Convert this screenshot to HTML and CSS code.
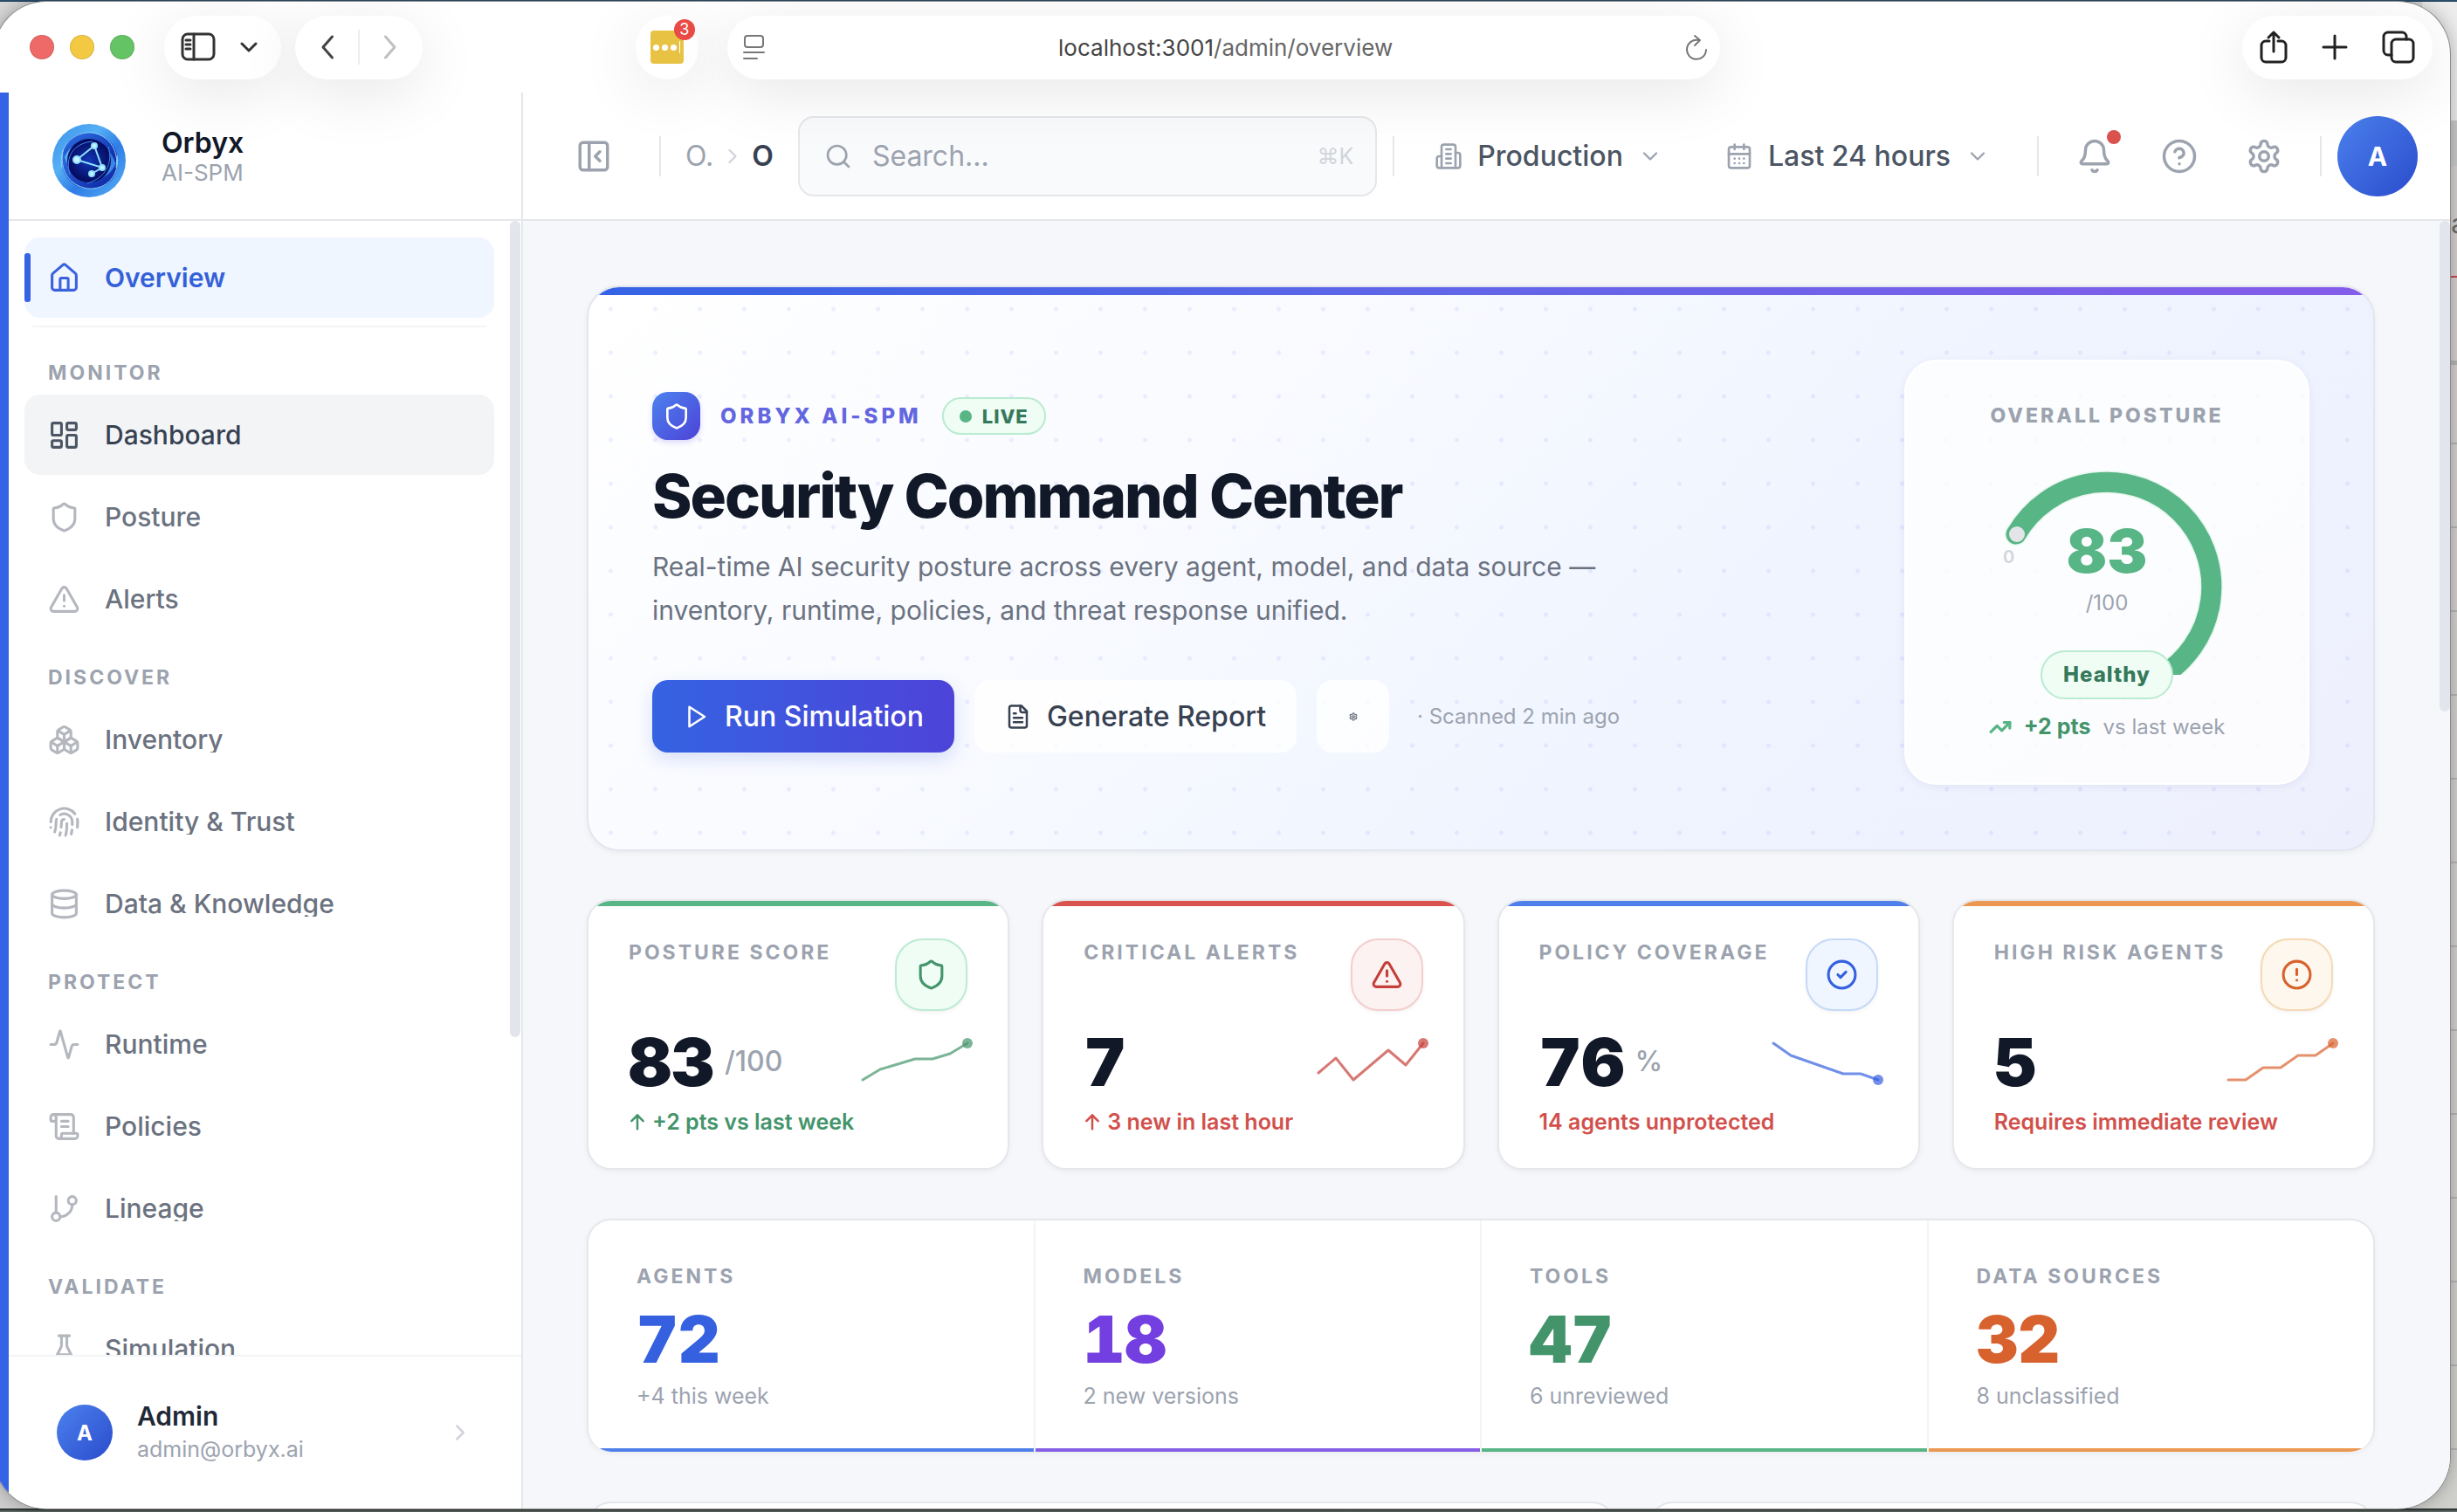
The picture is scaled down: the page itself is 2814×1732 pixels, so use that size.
FILE: index.html
```html
<!DOCTYPE html>
<html lang="en">

<head>
    <meta charset="UTF-8">
    <meta name="viewport" content="width=device-width, initial-scale=1.0">
    <title>Orbyx AI-SPM - Overview</title>
    <link rel="stylesheet" href="styles.css">
</head>

<body>
    <!-- Icon set -->
    <svg class="sprite" aria-hidden="true">
        <symbol id="i-home" viewBox="0 0 24 24"><path d="M15 21v-8a1 1 0 0 0-1-1h-4a1 1 0 0 0-1 1v8"/><path d="M3 10a2 2 0 0 1 .709-1.528l7-6a2 2 0 0 1 2.582 0l7 6A2 2 0 0 1 21 10v9a2 2 0 0 1-2 2H5a2 2 0 0 1-2-2z"/></symbol>
        <symbol id="i-dashboard" viewBox="0 0 24 24"><rect width="7" height="9" x="3" y="3" rx="1"/><rect width="7" height="5" x="14" y="3" rx="1"/><rect width="7" height="9" x="14" y="12" rx="1"/><rect width="7" height="5" x="3" y="16" rx="1"/></symbol>
        <symbol id="i-shield" viewBox="0 0 24 24"><path d="M20 13c0 5-3.500 7.500-7.660 8.950a1 1 0 0 1-.670-.010C7.500 20.500 4 18 4 13V6a1 1 0 0 1 1-1c2 0 4.500-1.200 6.240-2.720a1.170 1.170 0 0 1 1.520 0C14.510 3.810 17 5 19 5a1 1 0 0 1 1 1z"/></symbol>
        <symbol id="i-alert" viewBox="0 0 24 24"><path d="m21.730 18-8-14a2 2 0 0 0-3.480 0l-8 14A2 2 0 0 0 4 21h16a2 2 0 0 0 1.730-3"/><path d="M12 9v4"/><path d="M12 17h.01"/></symbol>
        <symbol id="i-boxes" viewBox="0 0 24 24"><path d="M2.970 12.920A2 2 0 0 0 2 14.630v3.240a2 2 0 0 0 .970 1.710l3 1.800a2 2 0 0 0 2.060 0L12 19v-5.500l-5-3-4.030 2.420Z"/><path d="m7 16.500-4.740-2.850"/><path d="m7 16.500 5-3"/><path d="M7 16.500v5.170"/><path d="M12 13.500V19l3.970 2.380a2 2 0 0 0 2.060 0l3-1.800a2 2 0 0 0 .970-1.710v-3.240a2 2 0 0 0-.970-1.710L17 10.500l-5 3Z"/><path d="m17 16.500-5-3"/><path d="m17 16.500 4.740-2.850"/><path d="M17 16.500v5.170"/><path d="M7.970 4.420A2 2 0 0 0 7 6.130v4.370l5 3 5-3V6.130a2 2 0 0 0-.970-1.710l-3-1.800a2 2 0 0 0-2.060 0l-3 1.800Z"/><path d="M12 8 7.260 5.150"/><path d="m12 8 4.740-2.850"/><path d="M12 13.500V8"/></symbol>
        <symbol id="i-fingerprint" viewBox="0 0 24 24"><path d="M12 10a2 2 0 0 0-2 2c0 1.020-.100 2.510-.260 4"/><path d="M14 13.120c0 2.380 0 6.380-1 8.880"/><path d="M17.290 21.020c.120-.600.430-2.300.500-3.020"/><path d="M2 12a10 10 0 0 1 18-6"/><path d="M2 16h.01"/><path d="M21.800 16c.200-2 .131-5.354 0-6"/><path d="M5 19.500C5.500 18 6 15 6 12a6 6 0 0 1 .340-2"/><path d="M8.650 22c.210-.660.450-1.320.570-2"/><path d="M9 6.800a6 6 0 0 1 9 5.200v2"/></symbol>
        <symbol id="i-database" viewBox="0 0 24 24"><ellipse cx="12" cy="5" rx="9" ry="3"/><path d="M3 5v14a9 3 0 0 0 18 0V5"/><path d="M3 12a9 3 0 0 0 18 0"/></symbol>
        <symbol id="i-activity" viewBox="0 0 24 24"><path d="M22 12h-2.480a2 2 0 0 0-1.930 1.460l-2.350 8.360a.25.25 0 0 1-.480 0L9.240 2.180a.25.25 0 0 0-.480 0l-2.350 8.360A2 2 0 0 1 4.490 12H2"/></symbol>
        <symbol id="i-scroll" viewBox="0 0 24 24"><path d="M15 12h-5"/><path d="M15 8h-5"/><path d="M19 17V5a2 2 0 0 0-2-2H4"/><path d="M8 21h12a2 2 0 0 0 2-2v-1a1 1 0 0 0-1-1H11a1 1 0 0 0-1 1v1a2 2 0 1 1-4 0V5a2 2 0 1 0-4 0v2a1 1 0 0 0 1 1h3"/></symbol>
        <symbol id="i-branch" viewBox="0 0 24 24"><path d="M6 3v12"/><circle cx="18" cy="6" r="3"/><circle cx="6" cy="18" r="3"/><path d="M18 9a9 9 0 0 1-9 9"/></symbol>
        <symbol id="i-flask" viewBox="0 0 24 24"><path d="M10 2v7.300a2 2 0 0 1-.200.900L4.700 20.500A1 1 0 0 0 5.700 22h12.600a1 1 0 0 0 1-1.500l-5.100-10.300a2 2 0 0 1-.200-.900V2"/><path d="M8 2h8"/><path d="M7 16h10"/></symbol>
        <symbol id="i-right" viewBox="0 0 24 24"><path d="m9 18 6-6-6-6"/></symbol>
        <symbol id="i-left" viewBox="0 0 24 24"><path d="m15 20-7-8 7-8"/></symbol>
        <symbol id="i-down" viewBox="0 0 24 24"><path d="m6 9 6 6 6-6"/></symbol>
        <symbol id="i-panel" viewBox="0 0 24 24"><rect width="18" height="18" x="3" y="3" rx="2"/><path d="M9 3v18"/><path d="m16 15-3-3 3-3"/></symbol>
        <symbol id="i-search" viewBox="0 0 24 24"><circle cx="11" cy="11" r="8"/><path d="m21 21-4.300-4.300"/></symbol>
        <symbol id="i-building" viewBox="0 0 24 24"><path d="M6 22V4a2 2 0 0 1 2-2h8a2 2 0 0 1 2 2v18Z"/><path d="M6 12H4a2 2 0 0 0-2 2v6a2 2 0 0 0 2 2h2"/><path d="M18 9h2a2 2 0 0 1 2 2v9a2 2 0 0 1-2 2h-2"/><path d="M10 6h4M10 10h4M10 14h4M10 18h4"/></symbol>
        <symbol id="i-calendar" viewBox="0 0 24 24"><path d="M8 2v4M16 2v4"/><rect width="18" height="18" x="3" y="4" rx="2"/><path d="M3 10h18"/><path d="M8 14h.01M12 14h.01M16 14h.01M8 18h.01M12 18h.01M16 18h.01"/></symbol>
        <symbol id="i-bell" viewBox="0 0 24 24"><path d="M10.268 21a2 2 0 0 0 3.464 0"/><path d="M3.262 15.326A1 1 0 0 0 4 17h16a1 1 0 0 0 .740-1.673C19.410 13.956 18 12.499 18 8A6 6 0 0 0 6 8c0 4.499-1.411 5.956-2.738 7.326"/></symbol>
        <symbol id="i-help" viewBox="0 0 24 24"><circle cx="12" cy="12" r="10"/><path d="M9.090 9a3 3 0 0 1 5.830 1c0 2-3 3-3 3"/><path d="M12 17h.01"/></symbol>
        <symbol id="i-settings" viewBox="0 0 24 24"><path d="M12.220 2h-.440a2 2 0 0 0-2 2v.180a2 2 0 0 1-1 1.730l-.430.250a2 2 0 0 1-2 0l-.150-.080a2 2 0 0 0-2.730.730l-.220.380a2 2 0 0 0 .730 2.730l.150.100a2 2 0 0 1 1 1.720v.510a2 2 0 0 1-1 1.740l-.150.090a2 2 0 0 0-.730 2.730l.220.380a2 2 0 0 0 2.730.730l.150-.080a2 2 0 0 1 2 0l.430.250a2 2 0 0 1 1 1.730V20a2 2 0 0 0 2 2h.440a2 2 0 0 0 2-2v-.180a2 2 0 0 1 1-1.730l.430-.250a2 2 0 0 1 2 0l.150.080a2 2 0 0 0 2.730-.730l.220-.390a2 2 0 0 0-.730-2.730l-.150-.080a2 2 0 0 1-1-1.740v-.500a2 2 0 0 1 1-1.740l.150-.090a2 2 0 0 0 .730-2.730l-.220-.380a2 2 0 0 0-2.730-.730l-.150.080a2 2 0 0 1-2 0l-.430-.250a2 2 0 0 1-1-1.730V4a2 2 0 0 0-2-2z"/><circle cx="12" cy="12" r="3"/></symbol>
        <symbol id="i-play" viewBox="0 0 24 24"><path d="m6 3 14 9-14 9z"/></symbol>
        <symbol id="i-file" viewBox="0 0 24 24"><path d="M15 2H6a2 2 0 0 0-2 2v16a2 2 0 0 0 2 2h12a2 2 0 0 0 2-2V7Z"/><path d="M14 2v4a2 2 0 0 0 2 2h4"/><path d="M10 9H8M16 13H8M16 17H8"/></symbol>
        <symbol id="i-trend" viewBox="0 0 24 24"><path d="m22 7-8.500 8.500-5-5L2 17"/><path d="M16 7h6v6"/></symbol>
        <symbol id="i-check" viewBox="0 0 24 24"><circle cx="12" cy="12" r="10"/><path d="m9 12 2 2 4-4"/></symbol>
        <symbol id="i-warn" viewBox="0 0 24 24"><circle cx="12" cy="12" r="10"/><path d="M12 8v4"/><path d="M12 16h.01"/></symbol>
        <symbol id="i-up" viewBox="0 0 24 24"><path d="m4 11 8-8 8 8"/><path d="M12 3v19"/></symbol>
    </svg>

    <!-- Window behind, only its right edge shows -->
    <div class="backdrop"><span>a</span></div>

    <div class="window">
        <div class="toolbar">
            <div class="lights">
                <span class="light red"></span>
                <span class="light yellow"></span>
                <span class="light green"></span>
            </div>
            <div class="pill pill-sidebar">
                <button type="button" aria-label="Sidebar">
                    <svg class="icon" width="40" height="34" viewBox="0 0 40 34"><rect x="2" y="2" width="36" height="29" rx="6"/><path d="M15 2v29M6 9h5M6 14h5M6 19h5"/></svg>
                </button>
                <button type="button" aria-label="Tab groups">
                    <svg class="icon" width="20" height="14" viewBox="0 0 20 14"><path d="m2 3 8 8 8-8"/></svg>
                </button>
            </div>
            <div class="pill pill-nav">
                <button type="button" aria-label="Back"><svg class="icon" width="36" height="36"><use href="#i-left"/></svg></button>
                <span class="pill-line"></span>
                <button type="button" class="off" aria-label="Forward"><svg class="icon flip" width="36" height="36"><use href="#i-left"/></svg></button>
            </div>
            <div class="toolbar-space"></div>
            <button type="button" class="pill pill-ext" aria-label="Password extension">
                <span class="ext-icon"><i></i><i></i><i></i><b></b></span>
                <span class="ext-badge">3</span>
            </button>
            <div class="pill pill-url">
                <svg class="icon" width="26" height="30" viewBox="0 0 26 30"><rect x="2" y="2" width="21" height="13" rx="3"/><path d="M1 21h23M1 28h15"/></svg>
                <span class="url">localhost:3001<em>/admin/overview</em></span>
                <button type="button" aria-label="Reload">
                    <svg class="icon" width="26" height="30" viewBox="0 0 26 30"><path d="M15 7A11 11 0 1 0 24 18"/><path d="m11 2 6 5-6 6"/></svg>
                </button>
            </div>
            <div class="toolbar-space wide"></div>
            <div class="pill pill-actions">
                <button type="button" aria-label="Share">
                    <svg class="icon" width="32" height="40" viewBox="0 0 32 40"><path d="M11 13H7a5 5 0 0 0-5 5v14a5 5 0 0 0 5 5h18a5 5 0 0 0 5-5V18a5 5 0 0 0-5-5h-4M16 25V3M10 9l6-6 6 6"/></svg>
                </button>
                <button type="button" aria-label="New tab">
                    <svg class="icon" width="30" height="30" viewBox="0 0 30 30"><path d="M15 2v26M2 15h26"/></svg>
                </button>
                <button type="button" aria-label="Tabs">
                    <svg class="icon" width="38" height="38" viewBox="0 0 38 38"><rect x="11" y="10" width="25" height="26" rx="5"/><path d="M11 28H7a5 5 0 0 1-5-5V7a5 5 0 0 1 5-5h16a5 5 0 0 1 5 5v3"/></svg>
                </button>
            </div>
        </div>

        <div class="app">
            <aside class="sidebar">
                <div class="brand">
                    <svg width="84" height="84" viewBox="0 0 84 84">
                        <defs>
                            <linearGradient id="ring" x1="0" y1="0" x2="1" y2="1">
                                <stop offset="0" stop-color="#3c8fe9"/>
                                <stop offset=".35" stop-color="#55b0f5"/>
                                <stop offset=".6" stop-color="#2f7ce6"/>
                                <stop offset="1" stop-color="#58b4f6"/>
                            </linearGradient>
                            <linearGradient id="arm" x1="0" y1="0" x2="1" y2="1">
                                <stop offset="0" stop-color="#2f74e8"/>
                                <stop offset="1" stop-color="#0a1f9c"/>
                            </linearGradient>
                            <radialGradient id="core">
                                <stop offset="0" stop-color="#1238b8"/>
                                <stop offset="1" stop-color="#050a5c"/>
                            </radialGradient>
                        </defs>
                        <circle cx="42" cy="42" r="42" fill="url(#ring)"/>
                        <path d="M12 46C8 26 22 8 44 10c22 2 34 20 30 40C70 34 62 26 48 22 30 16 14 28 12 46z" fill="url(#arm)"/>
                        <path d="M74 40c4 20-12 36-34 34C18 72 6 52 12 30c4 16 8 26 24 32 18 6 34-4 38-22z" fill="url(#arm)"/>
                        <circle cx="42" cy="42" r="25" fill="url(#core)"/>
                        <path d="M11 50C6 26 24 8 46 10c22 4 30 24 27 40M74 36c4 22-12 40-34 38C18 70 8 52 12 30" fill="none" stroke="#8dd2fb" stroke-width="1"/>
                        <path d="M20 58C14 38 24 22 46 20M64 26c6 20-4 36-24 42" fill="none" stroke="#3f86ee" stroke-width="1"/>
                        <g fill="#c9f4ff" stroke="#8fe0ff" stroke-width="2">
                            <path d="M28 41 48 25 57 50 28 41M57 50 45 57" fill="none"/>
                            <circle cx="28" cy="41" r="4"/><circle cx="48" cy="25" r="3"/><circle cx="57" cy="50" r="3"/><circle cx="45" cy="57" r="3"/>
                        </g>
                    </svg>
                    <div>
                        <div class="brand-name">Orbyx</div>
                        <div class="brand-sub">AI-SPM</div>
                    </div>
                </div>

                <nav class="nav">
                    <a href="#" class="nav-item active"><svg class="icon" width="37" height="37"><use href="#i-home"/></svg><span>Overview</span></a>
                    <div class="nav-line"></div>

                    <div class="nav-group">
                        <h2>Monitor</h2>
                        <a href="#" class="nav-item hover"><svg class="icon" width="37" height="37"><use href="#i-dashboard"/></svg><span>Dashboard</span></a>
                        <a href="#" class="nav-item"><svg class="icon" width="37" height="37"><use href="#i-shield"/></svg><span>Posture</span></a>
                        <a href="#" class="nav-item"><svg class="icon" width="37" height="37"><use href="#i-alert"/></svg><span>Alerts</span></a>
                    </div>
                    <div class="nav-group">
                        <h2>Discover</h2>
                        <a href="#" class="nav-item"><svg class="icon" width="37" height="37"><use href="#i-boxes"/></svg><span>Inventory</span></a>
                        <a href="#" class="nav-item"><svg class="icon" width="37" height="37"><use href="#i-fingerprint"/></svg><span>Identity &amp; Trust</span></a>
                        <a href="#" class="nav-item"><svg class="icon" width="37" height="37"><use href="#i-database"/></svg><span>Data &amp; Knowledge</span></a>
                    </div>
                    <div class="nav-group">
                        <h2>Protect</h2>
                        <a href="#" class="nav-item"><svg class="icon" width="37" height="37"><use href="#i-activity"/></svg><span>Runtime</span></a>
                        <a href="#" class="nav-item"><svg class="icon" width="37" height="37"><use href="#i-scroll"/></svg><span>Policies</span></a>
                        <a href="#" class="nav-item"><svg class="icon" width="37" height="37"><use href="#i-branch"/></svg><span>Lineage</span></a>
                    </div>
                    <div class="nav-group">
                        <h2>Validate</h2>
                        <a href="#" class="nav-item"><svg class="icon" width="37" height="37"><use href="#i-flask"/></svg><span>Simulation</span></a>
                    </div>
                    <div class="scrollbar nav-scroll"></div>
                </nav>

                <a href="#" class="account">
                    <span class="avatar small">A</span>
                    <span class="account-text">
                        <strong>Admin</strong>
                        <span>admin@orbyx.ai</span>
                    </span>
                    <svg class="icon" width="30" height="30"><use href="#i-right"/></svg>
                </a>
            </aside>

            <div class="content">
                <header class="topbar">
                    <button type="button" class="collapse" aria-label="Collapse sidebar"><svg class="icon" width="42" height="42"><use href="#i-panel"/></svg></button>
                    <span class="vline"></span>
                    <div class="crumbs">
                        <a href="#">O.</a>
                        <svg class="icon" width="28" height="28"><use href="#i-right"/></svg>
                        <strong>O</strong>
                    </div>
                    <label class="search">
                        <svg class="icon" width="32" height="32"><use href="#i-search"/></svg>
                        <input type="text" placeholder="Search..." aria-label="Search">
                        <kbd>⌘K</kbd>
                    </label>
                    <span class="vline"></span>
                    <button type="button" class="picker">
                        <svg class="icon" width="32" height="32"><use href="#i-building"/></svg>
                        Production
                        <svg class="icon" width="28" height="28"><use href="#i-down"/></svg>
                    </button>
                    <button type="button" class="picker">
                        <svg class="icon" width="32" height="32"><use href="#i-calendar"/></svg>
                        Last 24 hours
                        <svg class="icon" width="28" height="28"><use href="#i-down"/></svg>
                    </button>
                    <span class="vline"></span>
                    <div class="tools">
                        <button type="button" class="tool" aria-label="Notifications"><svg class="icon" width="42" height="42"><use href="#i-bell"/></svg><span class="dot"></span></button>
                        <button type="button" class="tool" aria-label="Help"><svg class="icon" width="42" height="42"><use href="#i-help"/></svg></button>
                        <button type="button" class="tool" aria-label="Settings"><svg class="icon" width="42" height="42"><use href="#i-settings"/></svg></button>
                    </div>
                    <span class="vline"></span>
                    <button type="button" class="avatar">A</button>
                </header>

                <main class="main">
                    <section class="hero">
                        <div class="hero-inner">
                            <div class="hero-text">
                                <div class="hero-top">
                                    <span class="hero-icon"><svg class="icon" width="32" height="32"><use href="#i-shield"/></svg></span>
                                    <span class="hero-label">ORBYX AI-SPM</span>
                                    <span class="live"><i></i>LIVE</span>
                                </div>
                                <h1>Security Command Center</h1>
                                <p>Real-time AI security posture across every agent, model, and data source — inventory, runtime, policies, and threat response unified.</p>
                                <div class="hero-actions">
                                    <button type="button" class="btn btn-primary"><svg class="icon" width="30" height="30"><use href="#i-play"/></svg>Run Simulation</button>
                                    <button type="button" class="btn"><svg class="icon" width="30" height="30"><use href="#i-file"/></svg>Generate Report</button>
                                    <button type="button" class="btn btn-square" aria-label="Settings"><svg class="icon" width="10" height="10"><use href="#i-settings"/></svg></button>
                                    <span class="scanned">· Scanned 2 min ago</span>
                                </div>
                            </div>

                            <div class="posture">
                                <h2>Overall Posture</h2>
                                <div class="gauge">
                                    <svg width="368" height="267" viewBox="0 0 368 267">
                                        <path d="M80 106A120 120 0 1 1 244 270" fill="none" stroke="#e5f6ed" stroke-width="26" stroke-linecap="round"/>
                                        <path d="M80 106A120 120 0 1 1 244 270" fill="none" stroke="#58b585" stroke-width="23" stroke-linecap="round"/>
                                        <circle cx="81" cy="106" r="9" fill="#e4e5e8"/>
                                    </svg>
                                    <span class="gauge-zero">0</span>
                                    <div class="gauge-value"><strong>83</strong><span>/100</span></div>
                                </div>
                                <span class="healthy">Healthy</span>
                                <div class="posture-trend">
                                    <svg class="icon" width="26" height="26"><use href="#i-trend"/></svg>
                                    <strong>+2 pts</strong>
                                    <span>vs last week</span>
                                </div>
                            </div>
                        </div>
                    </section>

                    <section class="kpis">
                        <article class="kpi green">
                            <div class="kpi-head">
                                <h3>Posture Score</h3>
                                <span class="kpi-icon"><svg class="icon" width="37" height="37"><use href="#i-shield"/></svg></span>
                            </div>
                            <div class="kpi-body">
                                <div class="kpi-value">83<small>/100</small></div>
                                <svg class="spark" width="120" height="42" viewBox="0 0 120 42"><polyline points="0,42 20,30 40,24 60,18 80,18 100,12 120,0"/><circle cx="120" cy="0" r="6"/></svg>
                            </div>
                            <p><svg class="icon" width="20" height="22"><use href="#i-up"/></svg>+2 pts vs last week</p>
                        </article>
                        <article class="kpi red">
                            <div class="kpi-head">
                                <h3>Critical Alerts</h3>
                                <span class="kpi-icon"><svg class="icon" width="37" height="37"><use href="#i-alert"/></svg></span>
                            </div>
                            <div class="kpi-body">
                                <div class="kpi-value">7</div>
                                <svg class="spark" width="120" height="42" viewBox="0 0 120 42"><polyline points="0,34 20,17 40,42 60,25 80,8 100,25 120,0"/><circle cx="120" cy="0" r="6"/></svg>
                            </div>
                            <p><svg class="icon" width="20" height="22"><use href="#i-up"/></svg>3 new in last hour</p>
                        </article>
                        <article class="kpi blue">
                            <div class="kpi-head">
                                <h3>Policy Coverage</h3>
                                <span class="kpi-icon"><svg class="icon" width="37" height="37"><use href="#i-check"/></svg></span>
                            </div>
                            <div class="kpi-body">
                                <div class="kpi-value">76<small>%</small></div>
                                <svg class="spark" width="120" height="42" viewBox="0 0 120 42"><polyline points="0,0 20,14 40,21 60,28 80,35 100,35 120,42"/><circle cx="120" cy="42" r="6"/></svg>
                            </div>
                            <p class="bad">14 agents unprotected</p>
                        </article>
                        <article class="kpi orange">
                            <div class="kpi-head">
                                <h3>High Risk Agents</h3>
                                <span class="kpi-icon"><svg class="icon" width="37" height="37"><use href="#i-warn"/></svg></span>
                            </div>
                            <div class="kpi-body">
                                <div class="kpi-value">5</div>
                                <svg class="spark" width="120" height="42" viewBox="0 0 120 42"><polyline points="0,42 20,42 40,28 60,28 80,14 100,14 120,0"/><circle cx="120" cy="0" r="6"/></svg>
                            </div>
                            <p class="bad">Requires immediate review</p>
                        </article>
                    </section>

                    <section class="stats">
                        <div class="stat blue">
                            <h3>Agents</h3>
                            <strong>72</strong>
                            <span>+4 this week</span>
                        </div>
                        <div class="stat purple">
                            <h3>Models</h3>
                            <strong>18</strong>
                            <span>2 new versions</span>
                        </div>
                        <div class="stat green">
                            <h3>Tools</h3>
                            <strong>47</strong>
                            <span>6 unreviewed</span>
                        </div>
                        <div class="stat orange">
                            <h3>Data Sources</h3>
                            <strong>32</strong>
                            <span>8 unclassified</span>
                        </div>
                    </section>

                    <section class="panels">
                        <div class="panel panel-wide"></div>
                        <div class="panel"></div>
                    </section>
                </main>
                <div class="scrollbar main-scroll"></div>
            </div>
        </div>
    </div>
</body>

</html>
```
FILE: styles.css
```css
* {
    margin: 0;
    padding: 0;
    box-sizing: border-box;
}

body {
    font-family: Inter, 'Liberation Sans', sans-serif;
    height: 100vh;
    overflow: hidden;
    position: relative;
    padding: 2px 8px 4px 0;
    color: #111827;
    background: linear-gradient(#2f5878 0, #1b3550 2px, #d8d8d8 2px, #cfcfcf calc(100% - 4px), #1c2422 calc(100% - 4px), #6b7470 100%);
}

button,
input {
    font: inherit;
    color: inherit;
    background: none;
    border: none;
    outline: none;
}

button {
    cursor: pointer;
    display: flex;
    align-items: center;
    justify-content: center;
}

a {
    color: inherit;
    text-decoration: none;
}

.sprite {
    position: absolute;
    width: 0;
    height: 0;
}

.icon {
    flex: none;
    fill: none;
    stroke: currentColor;
    stroke-width: 2;
    stroke-linecap: round;
    stroke-linejoin: round;
}

.backdrop {
    position: absolute;
    top: 2px;
    right: 0;
    bottom: 4px;
    width: 40px;
    overflow: hidden;
    background:
        linear-gradient(#c8484a, #c8484a) 0 314px / 100% 2px no-repeat,
        linear-gradient(#b4b4b4, #b4b4b4) 0 411px / 100% 5px no-repeat,
        repeating-linear-gradient(transparent 0, transparent 94px, #b4b4b4 94px, #b4b4b4 96px) 0 411px / 100% 1400px no-repeat,
        linear-gradient(#ececec 136px, #c8c8c8 136px, #c8c8c8 188px, #d4cfcf 188px, #cfcfcb 100%);
}

.backdrop span {
    position: absolute;
    top: 236px;
    right: -10px;
    font-size: 30px;
    color: #6b6b6b;
}

/* Browser window */
.window {
    position: relative;
    display: flex;
    flex-direction: column;
    height: 100%;
    margin-left: -7px;
    border-radius: 60px;
    overflow: hidden;
    background: #fff;
    box-shadow: 0 0 0 1px #8a8a8a, 0 0 20px rgba(0, 0, 0, 0.3);
}

.toolbar {
    position: relative;
    z-index: 2;
    display: flex;
    align-items: center;
    flex: none;
    height: 104px;
    padding: 0 20px 0 41px;
    pointer-events: none;
}

.lights {
    display: flex;
    gap: 18px;
    margin-right: 34px;
}

.light {
    width: 28px;
    height: 28px;
    border-radius: 50%;
    border: 1px solid rgba(0, 0, 0, 0.1);
}

.light.red { background: #ed6a68; }
.light.yellow { background: #f3c944; }
.light.green { background: #65c466; }

.pill {
    position: relative;
    display: flex;
    align-items: center;
    height: 73px;
    border-radius: 37px;
    background: #fff;
    box-shadow: 0 14px 70px rgba(0, 0, 0, 0.1);
    color: #333;
}

.pill .icon {
    stroke-width: 3;
}

.pill-sidebar {
    gap: 28px;
    width: 134px;
    padding-left: 19px;
    margin-right: 16px;
}

.pill-nav {
    justify-content: space-between;
    width: 146px;
    padding: 0 20px;
    color: #444;
}

.pill-nav .icon {
    stroke-width: 2;
}

.pill-nav .off {
    color: #c0c0c0;
}

.flip {
    transform: scaleX(-1);
}

.pill-line {
    width: 2px;
    height: 40px;
    background: #ededed;
}

.toolbar-space {
    flex: 244 1 0;
}

.toolbar-space.wide {
    flex-grow: 598;
}

.pill-ext {
    width: 72px;
    margin-right: 33px;
}

.ext-icon {
    display: flex;
    align-items: center;
    justify-content: center;
    gap: 3px;
    width: 38px;
    height: 38px;
    border-radius: 4px;
    background: #e8c243;
}

.ext-icon i {
    width: 7px;
    height: 7px;
    border-radius: 50%;
    background: #fff;
}

.ext-icon b {
    width: 1px;
    height: 14px;
    background: #fff;
}

.ext-badge {
    position: absolute;
    top: 4px;
    right: 4px;
    width: 24px;
    height: 24px;
    border-radius: 50%;
    background: #e94b46;
    color: #fff;
    font-size: 18px;
    line-height: 24px;
    text-align: center;
}

.pill-url {
    flex: 1106 1 0;
    justify-content: space-between;
    padding: 0 14px 0 18px;
    color: #777;
}

.pill-url .icon {
    stroke-width: 2;
}

.url {
    font-size: 26px;
    color: #444;
}

.url em {
    font-style: normal;
    color: #666;
}

.pill-actions {
    justify-content: space-between;
    width: 218px;
    padding: 0 20px;
    color: #222;
}

/* App shell */
.app {
    display: flex;
    flex: 1;
    min-height: 0;
    border-left: 17px solid #3563e5;
}

.sidebar {
    display: flex;
    flex-direction: column;
    flex: none;
    width: 589px;
    border-right: 2px solid #e5e7eb;
    background: #fff;
}

.brand {
    display: flex;
    align-items: center;
    gap: 41px;
    flex: none;
    height: 147px;
    padding: 10px 50px 0;
    border-bottom: 2px solid #e5e7eb;
}

.brand > div {
    margin-top: -8px;
}

.brand-name {
    font-size: 32px;
    line-height: 36px;
    font-weight: 600;
}

.brand-sub {
    font-size: 26px;
    line-height: 32px;
    color: #9ca3af;
}

.nav {
    position: relative;
    flex: 1;
    min-height: 0;
    overflow: hidden;
    padding: 19px 31px 0 18px;
}

.nav-item {
    position: relative;
    display: flex;
    align-items: center;
    gap: 28px;
    height: 92px;
    padding: 0 27px;
    border-radius: 18px;
    font-size: 30px;
    font-weight: 500;
    color: #6b7280;
}

.nav-item + .nav-item {
    margin-top: 2px;
}

.nav-item .icon {
    color: #b4b7be;
}

.nav-item span {
    line-height: 30px;
    overflow: hidden;
}

.nav-item.active {
    background: #eff6ff;
    color: #3560d8;
    font-weight: 600;
}

.nav-item.active .icon {
    color: #3b62dc;
}

.nav-item.active::before {
    content: '';
    position: absolute;
    left: 0;
    top: 18px;
    width: 7px;
    height: 56px;
    border-radius: 3px;
    background: #3563e5;
}

.nav-item.hover {
    background: #f3f4f6;
    color: #374151;
}

.nav-item.hover .icon {
    color: #4b5563;
}

.nav-line {
    height: 2px;
    margin: 9px 9px 8px;
    background: #f3f4f6;
}

.nav-group h2 {
    padding: 26px 27px 7px;
    font-size: 23px;
    line-height: 36px;
    font-weight: 700;
    letter-spacing: 3px;
    text-transform: uppercase;
    color: #9ca3af;
}

.scrollbar {
    position: absolute;
    top: 0;
    right: 0;
    width: 12px;
    border-radius: 6px;
    background: #e2e6ec;
}

.nav-scroll {
    height: 72%;
    right: 1px;
}

.account {
    display: flex;
    align-items: center;
    gap: 28px;
    flex: none;
    height: 176px;
    padding: 0 55px;
    border-top: 2px solid #f3f4f6;
}

.account-text {
    flex: 1;
    font-size: 25px;
    line-height: 38px;
    color: #9ca3af;
}

.account-text strong {
    display: block;
    font-size: 30px;
    font-weight: 600;
    color: #1f2937;
}

.account .icon {
    color: #d1d5db;
}

.avatar {
    display: flex;
    align-items: center;
    justify-content: center;
    flex: none;
    width: 92px;
    height: 92px;
    border-radius: 50%;
    background: linear-gradient(135deg, #4c82ee, #2a4bcc);
    color: #fff;
    font-size: 30px;
    font-weight: 700;
}

.avatar.small {
    width: 64px;
    height: 64px;
    font-size: 24px;
}

.content {
    position: relative;
    display: flex;
    flex-direction: column;
    flex: 1;
    min-width: 0;
    background: #f5f7fb;
}

/* Top bar */
.topbar {
    display: flex;
    align-items: center;
    flex: none;
    height: 147px;
    padding: 0 37px 0 60px;
    border-bottom: 2px solid #e5e7eb;
    background: #fff;
    color: #9ca3af;
}

.vline {
    flex: none;
    width: 2px;
    height: 46px;
    background: #e5e7eb;
}

.collapse {
    margin-right: 54px;
}

.crumbs {
    display: flex;
    align-items: center;
    gap: 8px;
    margin: 0 28px;
    font-size: 32px;
}

.crumbs strong {
    font-weight: 600;
    color: #374151;
}

.crumbs .icon {
    color: #d1d5db;
}

.search {
    display: flex;
    align-items: center;
    flex: 1;
    min-width: 0;
    gap: 23px;
    height: 92px;
    margin-right: 18px;
    padding: 0 25px 0 28px;
    border: 2px solid #e5e7eb;
    border-radius: 18px;
    background: #f9fafb;
}

.search input {
    flex: 1;
    min-width: 0;
    font-size: 32px;
}

.search input::placeholder {
    color: #9ca3af;
}

.search kbd {
    font-family: Inter, 'DejaVu Sans', sans-serif;
    font-size: 25px;
    color: #d1d5db;
}

.picker {
    gap: 17px;
    height: 83px;
    margin-left: 20px;
    padding: 0 26px;
    font-size: 32px;
    font-weight: 500;
    color: #4b5563;
    white-space: nowrap;
}

.picker + .vline {
    margin-left: 28px;
}

.picker .icon {
    color: #9ca3af;
}

.tools {
    display: flex;
    gap: 5px;
    margin: 0 18px;
}

.tool {
    position: relative;
    width: 92px;
    height: 92px;
}

.tool .dot {
    position: absolute;
    top: 16px;
    right: 16px;
    width: 16px;
    height: 16px;
    border-radius: 50%;
    background: #da524e;
}

.topbar .avatar {
    margin-left: 18px;
}

/* Main column */
.main {
    flex: 1;
    min-height: 0;
    overflow: hidden;
    padding: 74px 86px 0 73px;
}

.main-scroll {
    top: 147px;
    height: 562px;
}

.hero {
    border: 2px solid #e3e6ee;
    border-radius: 37px;
    overflow: hidden;
    background:
        radial-gradient(circle, rgba(99, 102, 241, 0.1) 2px, transparent 3px) 0 0 / 51px 50px,
        linear-gradient(135deg, #fff 0%, #f8faff 35%, #eff4ff 65%, #eeeffd 100%);
    box-shadow: 0 2px 6px rgba(0, 0, 0, 0.05);
}

.hero::before {
    content: '';
    display: block;
    height: 9px;
    background: linear-gradient(90deg, #3563e5, #6366e8 50%, #855cea);
}

.hero-inner {
    display: flex;
    align-items: center;
    justify-content: space-between;
    padding: 74px 73px;
}

.hero-text {
    flex: 1;
    min-width: 0;
}

.hero-top {
    display: flex;
    align-items: center;
    gap: 23px;
}

.hero-icon {
    display: flex;
    align-items: center;
    justify-content: center;
    width: 55px;
    height: 55px;
    border-radius: 18px;
    background: linear-gradient(135deg, #4c82ee, #4d43d8);
    box-shadow: 0 3px 6px rgba(79, 70, 229, 0.2);
    color: #fff;
}

.hero-label {
    font-size: 24px;
    font-weight: 800;
    letter-spacing: 4px;
    color: #6366e0;
}

.live {
    display: flex;
    align-items: center;
    gap: 12px;
    height: 43px;
    padding: 0 18px;
    border: 2px solid #b9ebd0;
    border-radius: 22px;
    background: #effdf5;
    color: #36795a;
    font-size: 22px;
    font-weight: 800;
    letter-spacing: 1px;
}

.live i {
    width: 14px;
    height: 14px;
    border-radius: 50%;
    background: #58b585;
}

.hero h1 {
    margin: 26px 0 18px;
    font-size: 69px;
    line-height: 76px;
    font-weight: 800;
    letter-spacing: -2px;
}

.hero p {
    max-width: 1105px;
    font-size: 30px;
    line-height: 50px;
    color: #6b7280;
}

.hero-actions {
    display: flex;
    align-items: center;
    gap: 23px;
    margin-top: 55px;
}

.btn {
    gap: 18px;
    height: 83px;
    padding: 0 35px;
    border-radius: 18px;
    background: rgba(255, 255, 255, 0.8);
    color: #374151;
    font-size: 32px;
    font-weight: 500;
    white-space: nowrap;
}

.btn-primary {
    background: linear-gradient(90deg, #3563e2, #4d43d8);
    box-shadow: 0 8px 20px rgba(59, 99, 226, 0.18);
    color: #fff;
}

.btn-square {
    width: 83px;
    padding: 0;
    color: #6b7280;
}

.btn-square .icon {
    stroke-width: 3;
}

.scanned {
    margin-left: 9px;
    font-size: 24px;
    color: #9ca3af;
}

.posture {
    display: flex;
    flex-direction: column;
    align-items: center;
    flex: none;
    width: 464px;
    padding: 44px 0 47px;
    border: 2px solid #fff;
    border-radius: 37px;
    background: rgba(255, 255, 255, 0.8);
    box-shadow: 0 2px 10px rgba(60, 70, 140, 0.08);
}

.posture h2 {
    font-size: 23px;
    line-height: 36px;
    font-weight: 800;
    letter-spacing: 3px;
    text-transform: uppercase;
    color: #9ca3af;
}

.gauge {
    position: relative;
    margin-top: 12px;
}

.gauge svg {
    display: block;
}

.gauge-zero {
    position: absolute;
    left: 65px;
    top: 120px;
    font-size: 20px;
    line-height: 24px;
    font-weight: 600;
    color: #d1d5db;
}

.gauge-value {
    position: absolute;
    inset: 90px 0 0;
    text-align: center;
    font-size: 24px;
    line-height: 38px;
    color: #9ca3af;
}

.gauge-value strong {
    display: block;
    font-size: 69px;
    line-height: 70px;
    font-weight: 900;
    color: #58b585;
}

.gauge-value span {
    display: block;
    margin-top: 6px;
}

.healthy {
    position: relative;
    height: 56px;
    margin-top: -28px;
    padding: 0 24px;
    border: 2px solid #b9ebd0;
    border-radius: 28px;
    background: #effdf5;
    color: #36795a;
    font-size: 24px;
    line-height: 52px;
    font-weight: 800;
    letter-spacing: 1px;
}

.posture-trend {
    display: flex;
    align-items: center;
    gap: 14px;
    margin-top: 14px;
    font-size: 24px;
    line-height: 35px;
    color: #9ca3af;
}

.posture-trend strong {
    font-size: 25px;
    font-weight: 700;
    color: #44946b;
}

.posture-trend .icon {
    stroke-width: 3;
    color: #58b585;
}

/* KPI cards */
.green { --bar: #58b585; --ink: #44946b; --tint: #effdf5; --line: #bdebd2; }
.red { --bar: #da524e; --ink: #c43f39; --tint: #fcf2f1; --line: #f3cecd; }
.blue { --bar: #4f7fea; --ink: #3560e0; --tint: #eff6ff; --line: #c5d9f7; }
.orange { --bar: #eb9852; --ink: #d8622e; --tint: #fef7ed; --line: #f5d9b3; }
.purple { --bar: #8560e6; --ink: #743fe0; }

.kpis {
    display: grid;
    grid-template-columns: repeat(4, 1fr);
    gap: 37px;
    margin-top: 55px;
}

.kpi {
    border: 2px solid #e5e7eb;
    border-radius: 28px;
    overflow: hidden;
    background: #fff;
    box-shadow: 0 2px 6px rgba(0, 0, 0, 0.05);
    padding: 0 46px 35px;
}

.kpi::before {
    content: '';
    display: block;
    height: 6px;
    margin: 0 -46px 37px;
    background: var(--bar);
}

.kpi-head {
    display: flex;
    justify-content: space-between;
}

.kpi h3,
.stat h3 {
    font-size: 23px;
    line-height: 32px;
    font-weight: 700;
    letter-spacing: 3px;
    text-transform: uppercase;
    color: #9ca3af;
}

.kpi h3 {
    white-space: nowrap;
}

.kpi-icon {
    display: flex;
    align-items: center;
    justify-content: center;
    flex: none;
    width: 83px;
    height: 83px;
    border: 2px solid var(--line);
    border-radius: 32px;
    background: var(--tint);
    box-shadow: 0 2px 4px rgba(0, 0, 0, 0.05);
    color: var(--ink);
}

.kpi-body {
    display: flex;
    align-items: center;
    justify-content: space-between;
    height: 76px;
    margin-top: 20px;
}

.kpi-value {
    display: flex;
    align-items: center;
    gap: 12px;
    font-size: 76px;
    line-height: 76px;
    font-weight: 900;
    font-variant-numeric: tabular-nums;
}

.kpi-value small {
    font-size: 32px;
    line-height: 38px;
    font-weight: 500;
    font-variant-numeric: normal;
    color: #9ca3af;
}

.spark {
    overflow: visible;
}

.spark polyline {
    fill: none;
    stroke: var(--ink);
    stroke-width: 3;
    stroke-linejoin: round;
    stroke-linecap: round;
    opacity: 0.7;
}

.spark circle {
    fill: var(--ink);
    opacity: 0.7;
}

.kpi p {
    display: flex;
    align-items: center;
    gap: 7px;
    margin-top: 13px;
    font-size: 25px;
    line-height: 36px;
    font-weight: 600;
    color: var(--ink);
}

.kpi p .icon {
    stroke-width: 3;
}

.kpi.red p,
.kpi .bad {
    color: #d2504c;
}

/* Inventory stats */
.stats {
    display: grid;
    grid-template-columns: repeat(4, 1fr);
    gap: 2px;
    margin-top: 56px;
    border: 2px solid #e5e7eb;
    border-bottom: none;
    border-radius: 28px;
    overflow: hidden;
    background: #f3f4f6;
    box-shadow: 0 2px 6px rgba(0, 0, 0, 0.05);
}

.stat {
    display: flex;
    flex-direction: column;
    padding: 48px 55px 45px;
    border-bottom: 4px solid var(--bar);
    background: #fff;
}

.stat strong {
    margin: 18px 0 12px;
    font-size: 74px;
    line-height: 76px;
    font-weight: 900;
    font-variant-numeric: tabular-nums;
    color: var(--ink);
}

.stat span {
    font-size: 25px;
    line-height: 30px;
    color: #9ca3af;
}

.panels {
    display: grid;
    grid-template-columns: repeat(12, 1fr);
    gap: 37px;
    margin-top: 57px;
}

.panel {
    grid-column: span 5;
    height: 400px;
    border: 2px solid #e5e7eb;
    border-radius: 28px;
    background: #fff;
}

.panel-wide {
    grid-column: span 7;
}
```
